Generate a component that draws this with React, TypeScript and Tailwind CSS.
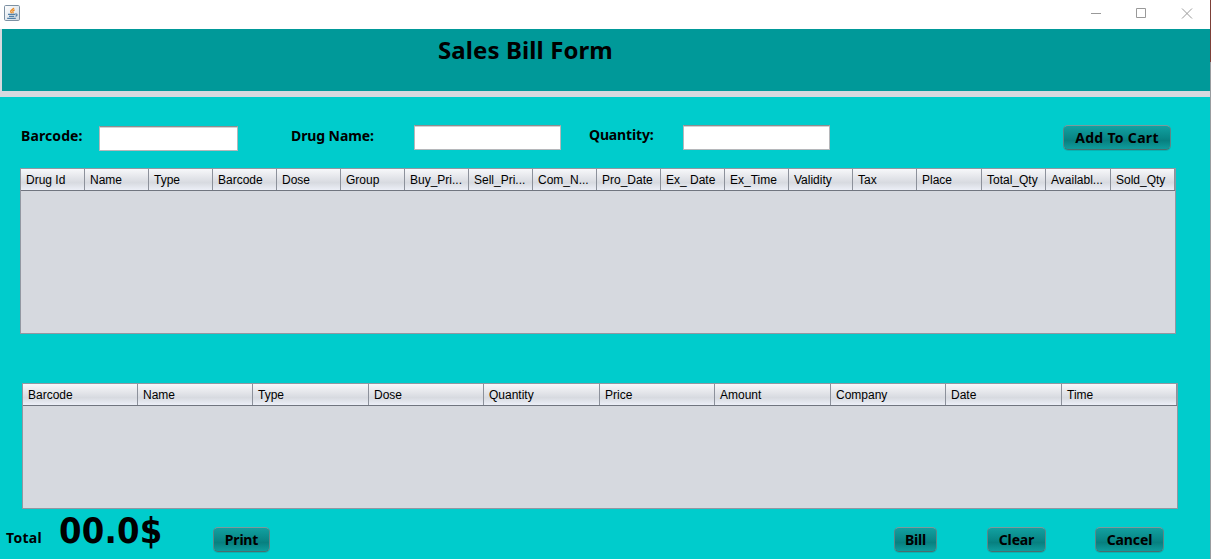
import React from "react";

const stockColumns: [string, number][] = [
  ["Drug Id", 64], ["Name", 64], ["Type", 64], ["Barcode", 64], ["Dose", 64], ["Group", 64],
  ["Buy_Pri...", 64], ["Sell_Pri...", 64], ["Com_N...", 64], ["Pro_Date", 64], ["Ex_ Date", 64],
  ["Ex_Time", 64], ["Validity", 64], ["Tax", 64], ["Place", 65], ["Total_Qty", 64],
  ["Availabl...", 65], ["Sold_Qty", 64],
];

const cartColumns: [string, number][] = [
  ["Barcode", 115], ["Name", 115], ["Type", 116], ["Dose", 115], ["Quantity", 116],
  ["Price", 115], ["Amount", 116], ["Company", 115], ["Date", 116], ["Time", 115],
];

function Label({ text, className }: { text: string; className: string }) {
  return (
    <span className={`block shrink-0 font-['Noto_Sans',sans-serif] text-[14px] leading-[18px] font-bold whitespace-nowrap text-black ${className}`}>
      {text}
    </span>
  );
}

function Table({ columns, className }: { columns: [string, number][]; className: string }) {
  return (
    <div className={`flex flex-col border border-[#9297a1] bg-[#d6d9df] ${className}`}>
      <div className="flex h-[22px] shrink-0 border-b border-[#70757f] bg-[linear-gradient(#f7f8fa_0%,#e1e3e8_45%,#d7dae0_65%,#eceff7_100%)]">
        {columns.map(([name, width]) => (
          <div
            key={name}
            style={{ width }}
            className="shrink-0 overflow-hidden border-r border-[#8c919b] pl-[5px] font-['Liberation_Sans',Arial,sans-serif] text-[12px] leading-[23px] whitespace-nowrap text-black"
          >
            {name}
          </div>
        ))}
      </div>
    </div>
  );
}

function Field({ className }: { className: string }) {
  return <input className={`h-[25px] shrink-0 border border-[#b5b7ba] border-t-[#8d8e8f] bg-white shadow-[inset_0_1px_0_#d2d2d2] outline-none ${className}`} />;
}

function Button({ label, spacing = "", className }: { label: string; spacing?: string; className: string }) {
  return (
    <button
      className={`flex h-[25px] shrink-0 items-center justify-center rounded-[5px] border border-[#4b6d6e] border-x-[#5f8586] border-t-[#7c9a9b] bg-[linear-gradient(#13a3a3_0%,#098888_50%,#078080_62%,#10a0a0_100%)] bg-origin-border shadow-[0_1px_0_#08b2b2] ${className}`}
    >
      <Label text={label} className={spacing} />
    </button>
  );
}

export default function App() {
  return (
    <div className="flex h-[559px] w-[1211px] overflow-hidden bg-[#00cccc]">
      <div className="flex w-[1210px] shrink-0 flex-col">
        <header className="flex h-[29px] shrink-0 items-start bg-white">
          <svg width="16" height="16" viewBox="0 0 16 16" className="mt-[5px] ml-[4px]">
            <defs>
              <linearGradient id="tile" x1="0" y1="0" x2="1" y2="1">
                <stop offset="0" stopColor="#fff" />
                <stop offset="1" stopColor="#cdd8e2" />
              </linearGradient>
            </defs>
            <rect x=".5" y=".5" width="15" height="15" rx="1.2" fill="url(#tile)" stroke="#7d91a3" />
            <path d="M9.8 2.8C9.6 4.4 6.4 5 6.7 6.6c.1.8.8 1.1 1.1 1.7M10.7 4.8c-1.8.8-2.2 1.3-1.7 2.2.3.5.1.9-.3 1.3" fill="none" stroke="#ed8b22" strokeWidth="1.3" />
            <path d="M4 9.4h7M5 11.4h5.2M3.2 13.4h8.6M11 9h1.6c1 .9.3 2-1.2 2.2" fill="none" stroke="#517fa6" strokeWidth="1.1" />
          </svg>
          <svg width="102" height="11" viewBox="0 0 102 11" className="mt-[8px] ml-[1071px]" fill="none" stroke="#999">
            <path d="M0 5.5h10M45.5.5h9v9h-9zM91 .5l10 10M101 .5l-10 10" />
          </svg>
        </header>
        <section className="flex h-[68px] shrink-0 border-b-[6px] border-l-2 border-[#d6d9df] bg-[#009999] pt-[6px] pl-[436px]">
          <h1 className="font-['Noto_Sans',sans-serif] text-[24px] leading-[30px] font-bold tracking-[0.1px] whitespace-nowrap text-black">Sales Bill Form</h1>
        </section>
        <main className="flex min-h-0 flex-1 flex-col">
          <div className="flex h-[71px] shrink-0 items-start pt-[28px] pl-[21px]">
            <Label text="Barcode:" className="mt-[2px] w-[62px] tracking-[0.1px]" />
            <Field className="mt-px ml-[16px] w-[139px]" />
            <Label text="Drug Name:" className="mt-[2px] ml-[53px] w-[83px] tracking-[-0.1px]" />
            <Field className="ml-[40px] w-[147px]" />
            <Label text="Quantity:" className="mt-px ml-[28px] w-[65px] tracking-[-0.15px]" />
            <Field className="ml-[29px] w-[147px]" />
            <Button label="Add To Cart" spacing="tracking-[0.3px]" className="ml-[233px] w-[108px]" />
          </div>
          <Table columns={stockColumns} className="ml-[20px] h-[166px] w-[1156px] shrink-0" />
          <Table columns={cartColumns} className="mt-[49px] ml-[22px] h-[126px] w-[1156px] shrink-0" />
          <footer className="flex min-h-0 flex-1 items-start pl-[6px]">
            <Label text="Total" className="mt-[20px] w-[36px] tracking-[0.3px]" />
            <span className="ml-[17px] w-[102px] shrink-0 font-['DejaVu_Sans_Condensed','DejaVu_Sans',sans-serif] text-[36px] leading-[44px] font-bold tracking-[0.2px] [font-stretch:condensed] whitespace-nowrap text-black">00.0$</span>
            <Button label="Print" spacing="tracking-[-0.2px]" className="mt-[18px] ml-[52px] w-[57px]" />
            <Button label="Bill" spacing="tracking-[-0.2px]" className="mt-[18px] ml-[624px] w-[43px]" />
            <Button label="Clear" spacing="tracking-[-0.15px]" className="mt-[18px] ml-[50px] w-[59px]" />
            <Button label="Cancel" spacing="tracking-[-0.1px]" className="mt-[18px] ml-[49px] w-[69px]" />
          </footer>
        </main>
      </div>
      <div className="flex w-px shrink-0 flex-col bg-[#999c9f]">
        <div className="h-[62px] bg-[#7d4038]" />
      </div>
    </div>
  );
}
